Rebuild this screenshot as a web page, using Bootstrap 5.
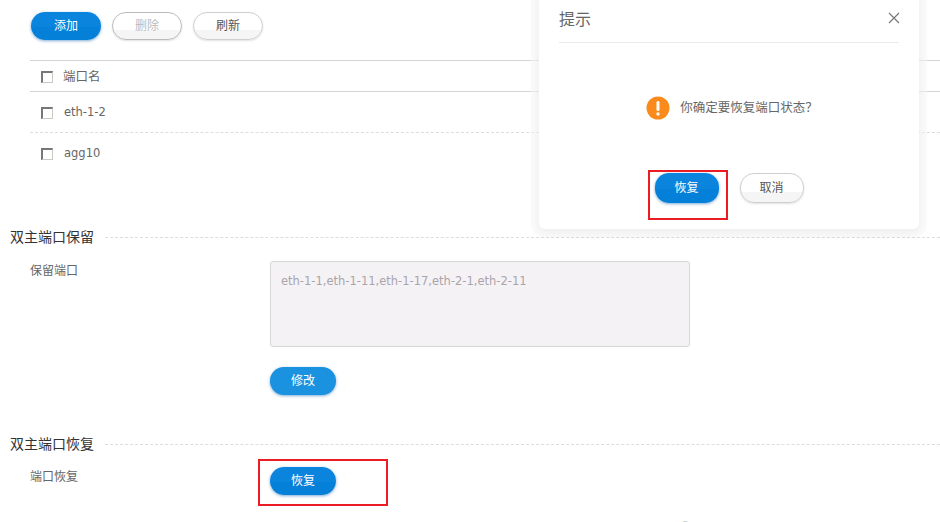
<!DOCTYPE html>
<html lang="zh">
<head>
<meta charset="utf-8">
<title>双主端口</title>
<link href="https://cdn.jsdelivr.net/npm/bootstrap@5.3.0/dist/css/bootstrap.min.css" rel="stylesheet">
<style>
html,body{height:522px;overflow:hidden;background:#fff}
body{position:relative;font-family:"Liberation Sans","Noto Sans CJK SC",sans-serif;font-size:12px;color:#666}
.pill{width:70px;height:28px;border-radius:14px;font-size:12px;line-height:26px;padding:0;border:1px solid #d0cfcf;background:linear-gradient(#fff 0,#fff 65%,#f5f5f5 65%);color:#555;box-shadow:0 1px 2px rgba(0,0,0,.12)}
.pill-blue{border:0;line-height:28px;color:#fff;background:linear-gradient(#0a84dc 0,#0a84dc 55%,#0580d8 55%);box-shadow:0 1px 3px rgba(0,90,170,.5)}
.pill-mid{width:66px}
.pill-soft{background:#1a92e0}
.pill-w{width:64px;height:30px;line-height:28px}
.pill-w.pill-blue{line-height:30px}
.pill:disabled{opacity:1;color:#bbb}
.toolbar{padding:12px 0 0 31px;height:60px;gap:11px}
.tbl{margin-left:30px;border-top:1px solid #d5d5d5}
.tbl-head{height:31px;border-bottom:1px solid #d5d5d5;padding:2px 0 0 11px;gap:10px;font-size:12.5px}
.tbl-row{height:41px;padding:2px 0 0 11px;gap:11px;border-bottom:1px dashed #ddd;font-family:"DejaVu Sans","Noto Sans CJK SC",sans-serif;font-size:11.5px}
.tbl-row:last-child{height:40px;border-bottom:0}
.chk{width:12px;height:12px;border:1px solid #ccc8c2;border-top:2px solid #777;border-left:2px solid #777;background:#fff;flex:none}
.sect{height:14px;gap:11px;margin-left:10px;font-size:14px;color:#333;white-space:nowrap}
.sect::after{content:"";flex:1;border-top:1px dashed #ddd}
.sect-one{margin-top:57px}
.sect-two{margin-top:42px}
.lbl{width:240px;margin-left:30px;padding-top:1px;flex:none}
.form-one{margin-top:17px}
.form-control.ports,.form-control.ports:disabled{width:420px;height:86px;background:#f5f2f6;border:1px solid #d6d6d6;border-radius:3px;padding:11px 10px;font-family:"DejaVu Sans","Noto Sans CJK SC",sans-serif;font-size:11.5px;color:#aaa4aa;resize:none;line-height:16px;display:block}
.mt-edit{margin-top:20px}
.form-two{margin-top:16px}
.redbox{border:2px solid #ec1c24;position:absolute}
.red-main{left:258px;top:459px;width:130px;height:47px}
.red-dlg{left:109px;top:178px;width:80px;height:50px}
.dlg{position:absolute;left:539px;top:-8px;width:380px;height:237px;background:#fff;border-radius:6px;box-shadow:0 0 0 8px rgba(245,245,247,.55),0 3px 8px rgba(0,0,0,.12)}
.dlg-title{margin:8px 20px 0;height:43px;border-bottom:1px solid #eaeaea;font-size:16px;color:#666;padding-top:8px}
.dlg-x{width:12px;height:12px;margin-right:-1px;margin-top:4px;background:none;border:0;padding:0;display:block}
.dlg-msg{height:130px;gap:10px;color:#666;font-size:12.5px;padding-left:6px}
.dlg-foot{gap:21px}
.footnote{position:absolute;left:626px;top:518px;color:#aaa;font-size:12px;white-space:nowrap}
</style>
</head>
<body>
<div class="d-flex toolbar">
  <button type="button" class="btn pill pill-blue">添加</button>
  <button type="button" class="btn pill" disabled>删除</button>
  <button type="button" class="btn pill">刷新</button>
</div>
<div class="tbl">
  <div class="d-flex align-items-center tbl-head"><span class="chk"></span><span>端口名</span></div>
  <div class="d-flex align-items-center tbl-row"><span class="chk"></span><span>eth-1-2</span></div>
  <div class="d-flex align-items-center tbl-row"><span class="chk"></span><span>agg10</span></div>
</div>

<div class="d-flex align-items-center sect sect-one">双主端口保留</div>
<div class="d-flex form-one">
  <div class="lbl">保留端口</div>
  <div>
    <textarea class="form-control ports" disabled>eth-1-1,eth-1-11,eth-1-17,eth-2-1,eth-2-11</textarea>
    <button type="button" class="btn pill pill-blue pill-mid pill-soft mt-edit">修改</button>
  </div>
</div>

<div class="d-flex align-items-center sect sect-two">双主端口恢复</div>
<div class="d-flex form-two">
  <div class="lbl">端口恢复</div>
  <button type="button" class="btn pill pill-blue pill-mid">恢复</button>
</div>
<div class="redbox red-main"></div>
<div class="footnote">Copyright © 2021 All Rights Reserved</div>

<div class="dlg">
  <div class="d-flex justify-content-between align-items-start dlg-title">
    <span>提示</span>
    <button type="button" class="dlg-x" aria-label="关闭"><svg width="12" height="12" viewBox="0 0 12 12" class="d-block"><path d="M1 1l10 10M11 1L1 11" stroke="#777" stroke-width="1.2" fill="none"/></svg></button>
  </div>
  <div class="d-flex align-items-center justify-content-center dlg-msg">
    <svg width="24" height="24" viewBox="0 0 24 24"><circle cx="12" cy="12" r="11.5" fill="#fa8a1c"/><rect x="10.5" y="5" width="3" height="10" rx="1.5" fill="#fff"/><circle cx="12" cy="18" r="1.7" fill="#fff"/></svg>
    <span>你确定要恢复端口状态？</span>
  </div>
  <div class="d-flex justify-content-center dlg-foot">
    <button type="button" class="btn pill pill-blue pill-w">恢复</button>
    <button type="button" class="btn pill pill-w">取消</button>
  </div>
  <div class="redbox red-dlg"></div>
</div>
<script src="https://cdn.jsdelivr.net/npm/bootstrap@5.3.0/dist/js/bootstrap.bundle.min.js"></script>
</body>
</html>
